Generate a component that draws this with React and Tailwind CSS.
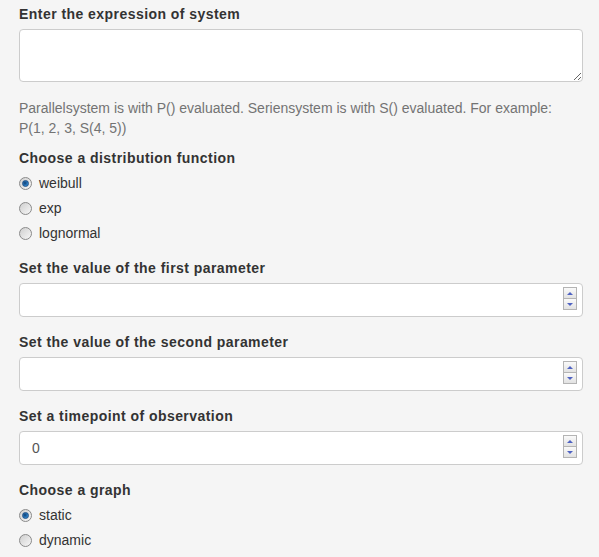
import React, { useState } from 'react';

const font = { fontFamily: '"Liberation Sans", Arial, sans-serif' };

// old-style gray radio button with blue dot when checked
const Radio = ({ checked, label, onClick }) => (
  <div className="flex h-5 items-center cursor-pointer" onClick={onClick}>
    <span className="mr-[7px] flex h-[13px] w-[13px] items-center justify-center rounded-full border border-[#8a8a8a] bg-gradient-to-br from-[#cfcfcf] to-[#f7f7f7]">
      {checked && (
        <span className="h-[7px] w-[7px] rounded-full border border-[#1d4f86] bg-[radial-gradient(circle_at_40%_40%,#0f3f73,#2f86cf_70%,#7cc3f0)]" />
      )}
    </span>
    <span className="text-[14px] text-[#333]">{label}</span>
  </div>
);

const RadioGroup = ({ title, options, value, onChange }) => (
  <div className="mb-[15px]">
    <label className="mb-[5px] block h-5 text-[14px] font-bold leading-5 tracking-[0.45px] text-[#333]">{title}</label>
    <div className="flex flex-col gap-[5px]">
      {options.map((o) => (
        <Radio key={o} label={o} checked={value === o} onClick={() => onChange(o)} />
      ))}
    </div>
  </div>
);

const Spinner = () => (
  <div className="absolute right-[6px] top-[4px] flex w-[14px] flex-col">
    <div className="flex h-[12px] items-center justify-center border border-[#b4b4b4] bg-gradient-to-b from-[#fafafa] to-[#e2e2e2]">
      <span className="h-0 w-0 border-x-[3px] border-b-[3px] border-x-transparent border-b-[#4f62c2]" />
    </div>
    <div className="-mt-px flex h-[12px] items-center justify-center border border-[#b4b4b4] bg-gradient-to-b from-[#fafafa] to-[#e2e2e2]">
      <span className="h-0 w-0 border-x-[3px] border-t-[3px] border-x-transparent border-t-[#4f62c2]" />
    </div>
  </div>
);

const NumberField = ({ title, value }) => (
  <div className="mb-[15px]">
    <label className="mb-[5px] block h-5 text-[14px] font-bold leading-5 tracking-[0.45px] text-[#333]">{title}</label>
    <div className="relative w-[564px]">
      <input
        type="text"
        defaultValue={value}
        className="block h-[34px] w-full rounded-[4px] border border-[#ccc] bg-white px-3 text-[14px] text-[#555] outline-none"
      />
      <Spinner />
    </div>
  </div>
);

export default function App() {
  const [dist, setDist] = useState('weibull');
  const [graph, setGraph] = useState('static');

  return (
    <div className="h-[557px] w-[599px] overflow-hidden bg-[#f5f5f5] pl-[19px] pt-1" style={font}>
      <div className="mb-4">
        <label className="mb-[5px] block h-5 text-[14px] font-bold leading-5 tracking-[0.45px] text-[#333]">
          Enter the expression of system
        </label>
        <textarea className="block h-[53px] w-[564px] rounded-[4px] border border-[#ccc] bg-white px-3 py-[6px] text-[14px] text-[#555] outline-none" />
      </div>

      <p className="mb-[10px] w-[550px] text-[14px] leading-5 text-[#737373]">
        Parallelsystem is with P() evaluated. Seriensystem is with S() evaluated. For example: P(1, 2, 3, S(4, 5))
      </p>

      <RadioGroup
        title="Choose a distribution function"
        options={['weibull', 'exp', 'lognormal']}
        value={dist}
        onChange={setDist}
      />

      <NumberField title="Set the value of the first parameter" value="" />
      <NumberField title="Set the value of the second parameter" value="" />
      <NumberField title="Set a timepoint of observation" value="0" />

      <RadioGroup
        title="Choose a graph"
        options={['static', 'dynamic']}
        value={graph}
        onChange={setGraph}
      />
    </div>
  );
}
